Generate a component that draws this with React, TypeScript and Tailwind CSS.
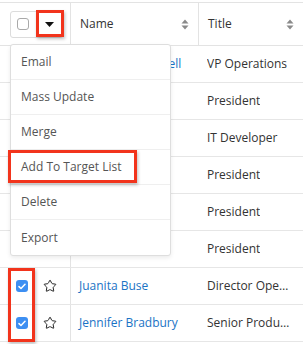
import { Star } from "lucide-react";

/* =========================
   DATA
========================= */
const rows = [
  { name: "Ramona Campbell", title: "VP Operations", checked: false },
  { name: "Sally Bronsell", title: "President", checked: false },
  { name: "Rob Kenney", title: "IT Developer", checked: false },
  { name: "Max Jensen", title: "President", checked: false },
  { name: "Mary Kelley", title: "President", checked: false },
  { name: "Gary Kennedy", title: "President", checked: false },
  { name: "Juanita Buse", title: "Director Operations", checked: true },
  { name: "Jennifer Bradbury", title: "Senior Product Manager", checked: true },
];

const actions = ["Email", "Mass Update", "Merge", "Add To Target List", "Delete", "Export"];

/* =========================
   BITS
========================= */
function SortIcon() {
  return (
    <svg width="8" height="11" viewBox="0 0 8 11" className="shrink-0">
      <path d="M4 0.5 L7.5 4.5 H0.5 Z" fill="#8a8a8a" />
      <path d="M4 10.5 L7.5 6.5 H0.5 Z" fill="#8a8a8a" />
    </svg>
  );
}

function Checkbox({ checked }: { checked: boolean }) {
  if (checked) {
    return (
      <span className="flex h-[12px] w-[12px] shrink-0 items-center justify-center rounded-[3px] bg-[#3d8ff2]">
        <svg width="8" height="7" viewBox="0 0 8 7">
          <path d="M1 3.6 L3 5.5 L7 1.2" stroke="white" strokeWidth="1.5" fill="none" strokeLinecap="round" strokeLinejoin="round" />
        </svg>
      </span>
    );
  }
  return <span className="block h-[12px] w-[12px] shrink-0 rounded-[3px] border border-[#a9a9a9] bg-white" />;
}

/* =========================
   PAGE
========================= */
export default function App() {
  return (
    <div
      className="relative h-[344px] w-[303px] overflow-hidden bg-white text-[12px] text-[#333]"
      style={{ fontFamily: '"Open Sans", "Liberation Sans", sans-serif' }}
    >
      {/* HEADER */}
      <div className="mt-[2px] grid h-[44px] grid-cols-[71px_128px_104px] border-y border-[#e3e3e3]">
        <div className="flex items-center border-r border-[#e3e3e3] pl-[10px]">
          <div className="flex h-[27px] w-[53px] items-center rounded-[3px] border border-[#dcdcdc] pl-[6px]">
            <Checkbox checked={false} />
            <svg width="9" height="5" viewBox="0 0 9 5" className="ml-[16px]">
              <path d="M0 0 H9 L4.5 5 Z" fill="#111" />
            </svg>
          </div>
        </div>
        <div className="flex items-center justify-between border-r border-[#e3e3e3] pl-[9px] pr-[9px]">
          <span>Name</span>
          <SortIcon />
        </div>
        <div className="flex items-center justify-between pl-[9px] pr-[9px]">
          <span>Title</span>
          <SortIcon />
        </div>
      </div>

      {/* ROWS */}
      {rows.map((r) => (
        <div key={r.name} className="grid h-[37px] grid-cols-[71px_128px_104px] border-b border-[#e6e6e6]">
          <div className="flex items-center border-r border-[#e3e3e3] pl-[16px]">
            <Checkbox checked={r.checked} />
            <Star size={14} strokeWidth={1.7} className="ml-[15px] text-[#222]" />
          </div>
          <div className="flex items-center truncate whitespace-nowrap pl-[8px] text-[#1a73c5]">{r.name}</div>
          <div className="flex min-w-0 items-center pl-[8px] pr-[12px]">
            <span className="truncate">{r.title}</span>
          </div>
        </div>
      ))}

      {/* DROPDOWN MENU */}
      <div className="absolute left-[10px] top-[44px] w-[161px] rounded-[3px] border border-[#dedede] bg-white shadow-[0_2px_4px_rgba(0,0,0,0.08)]">
        {actions.map((a, i) => (
          <div
            key={a}
            className={`flex h-[35px] items-center pl-[10px] text-[#555] ${i < actions.length - 1 ? "border-b border-[#efefef]" : ""}`}
          >
            {a}
          </div>
        ))}
      </div>

      {/* HIGHLIGHTS */}
      <div className="absolute left-[36px] top-[10px] h-[27px] w-[28px] border-[3px] border-[#f2341c] shadow-[1px_2px_3px_rgba(0,0,0,0.25)]" />
      <div className="absolute left-[8px] top-[150px] h-[33px] w-[129px] border-[3px] border-[#f2341c] shadow-[1px_2px_3px_rgba(0,0,0,0.25)]" />
      <div className="absolute left-[8px] top-[268px] h-[74px] w-[27px] border-[3px] border-[#f2341c] shadow-[1px_2px_3px_rgba(0,0,0,0.25)]" />
    </div>
  );
}
